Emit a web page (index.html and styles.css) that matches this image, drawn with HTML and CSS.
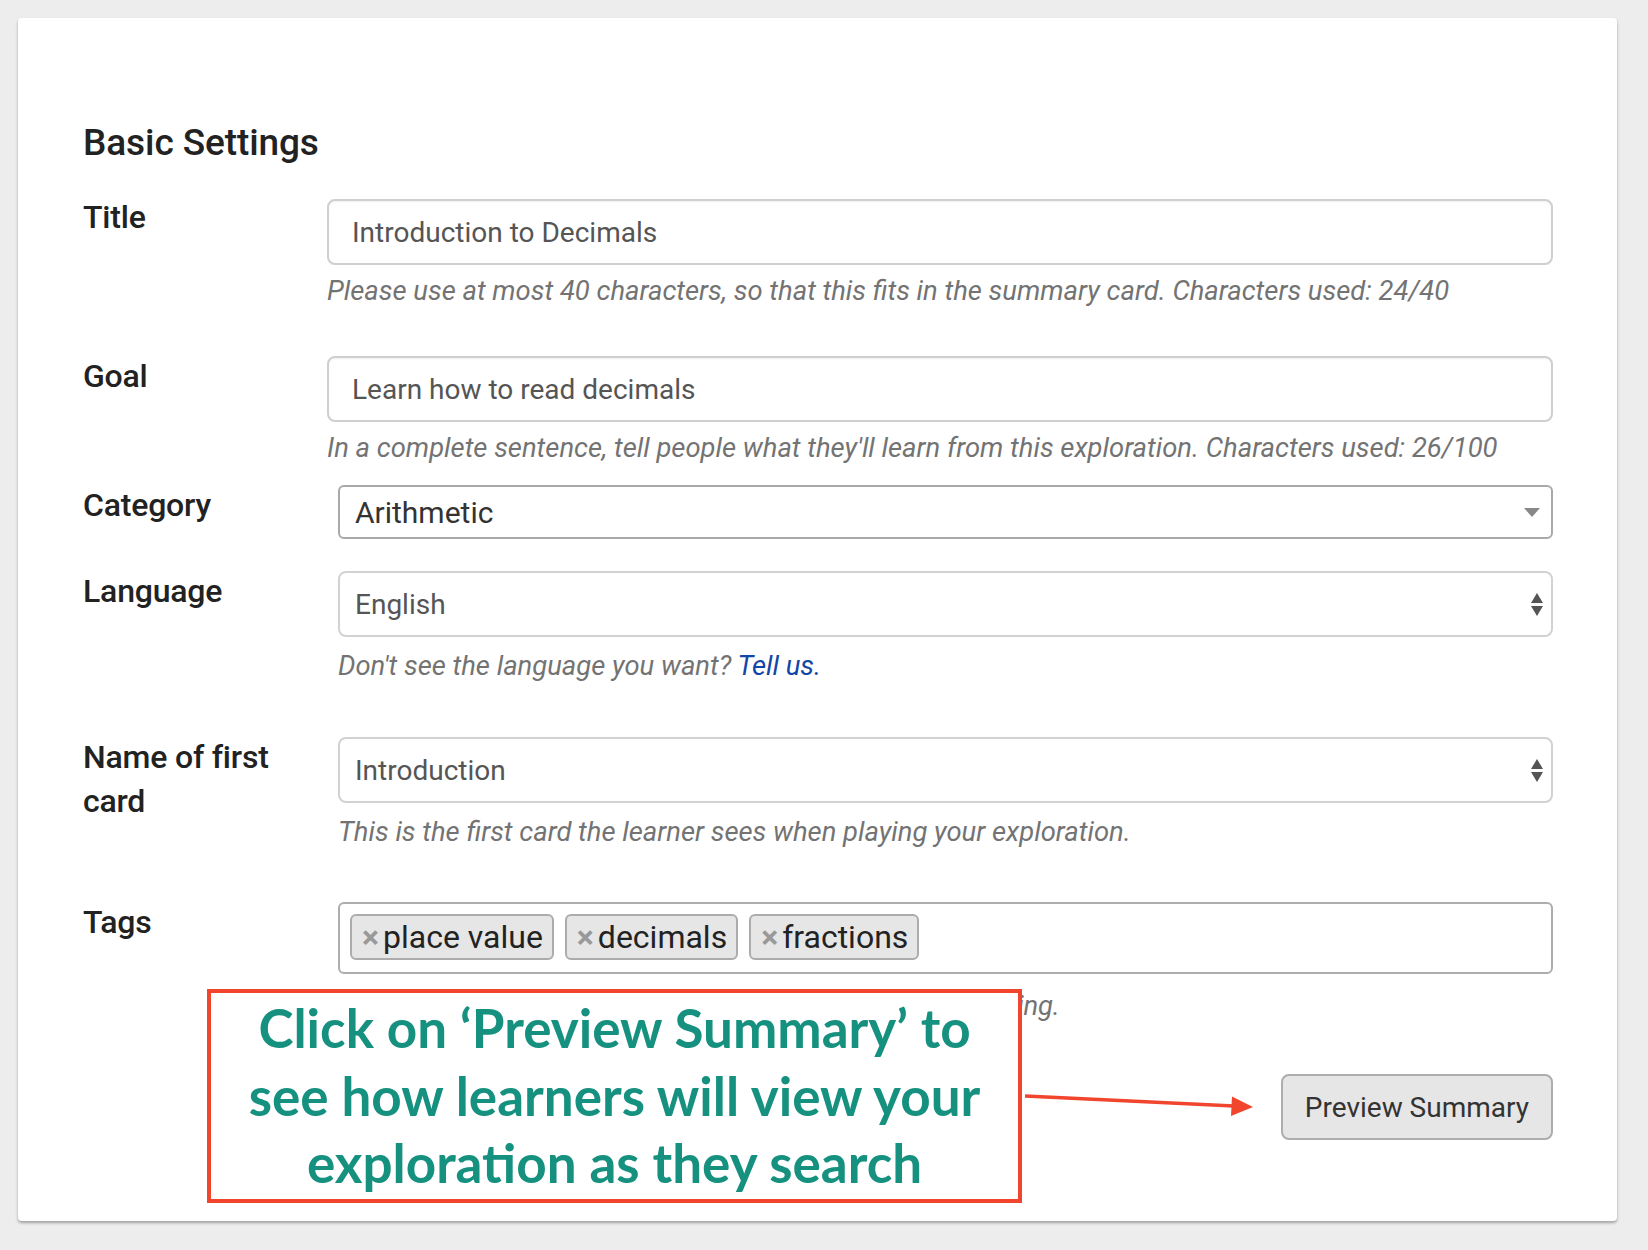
FILE: index.html
```html
<!DOCTYPE html>
<html lang="en">
<head>
<meta charset="utf-8">
<title>Basic Settings</title>
<link rel="stylesheet" href="styles.css">
</head>
<body>
<main class="card">
  <h2 class="heading">Basic Settings</h2>

  <section class="row row-title">
    <div class="label label-title">Title</div>
    <div class="field">
      <div class="text-input">Introduction to Decimals</div>
      <p class="help">Please use at most 40 characters, so that this fits in the summary card. Characters used: 24/40</p>
    </div>
  </section>

  <section class="row row-goal">
    <div class="label">Goal</div>
    <div class="field">
      <div class="text-input">Learn how to read decimals</div>
      <p class="help">In a complete sentence, tell people what they'll learn from this exploration. Characters used: 26/100</p>
    </div>
  </section>

  <section class="row row-category">
    <div class="label">Category</div>
    <div class="field indent">
      <div class="select select-dark">
        <span class="select-value">Arithmetic</span>
        <span class="caret-down"></span>
      </div>
    </div>
  </section>

  <section class="row row-language">
    <div class="label">Language</div>
    <div class="field indent">
      <div class="select">
        <span>English</span>
        <span class="updown"><span class="tri-up"></span><span class="tri-down"></span></span>
      </div>
      <p class="help help-select">Don't see the language you want? <a class="link" href="#">Tell us.</a></p>
    </div>
  </section>

  <section class="row row-card">
    <div class="label">Name of first card</div>
    <div class="field indent">
      <div class="select">
        <span>Introduction</span>
        <span class="updown"><span class="tri-up"></span><span class="tri-down"></span></span>
      </div>
      <p class="help help-select">This is the first card the learner sees when playing your exploration.</p>
    </div>
  </section>

  <section class="row row-tags">
    <div class="label">Tags</div>
    <div class="field indent">
      <div class="tag-box">
        <span class="chip"><span class="chip-x">×</span>place value</span>
        <span class="chip"><span class="chip-x">×</span>decimals</span>
        <span class="chip"><span class="chip-x">×</span>fractions</span>
      </div>
      <p class="help help-tags">Add tags to help learners find the exploration when searching.</p>
    </div>
  </section>

  <div class="actions">
    <button class="btn" type="button">Preview Summary</button>
  </div>

  <div class="callout">Click on ‘Preview Summary’ to<br>see how learners will view your<br>exploration as they search</div>
  <svg class="callout-arrow" width="240" height="36" viewBox="0 0 240 36" aria-hidden="true">
    <line x1="5" y1="11" x2="214" y2="21" stroke="#f2452d" stroke-width="3.5"/>
    <polygon points="212,11.5 233,22 211,31" fill="#f2452d"/>
  </svg>
</main>
</body>
</html>
```

FILE: styles.css
```css
* { box-sizing: border-box; }

html, body {
  margin: 0;
  padding: 0;
  background: #ededed;
}

body {
  font-family: Roboto, "Noto Sans", "Liberation Sans", sans-serif;
  color: #222;
  padding: 18px 31px 29px 18px;
}

.card {
  position: relative;
  background: #fff;
  border-radius: 4px;
  box-shadow: 0 2px 3px rgba(0, 0, 0, 0.32);
  padding: 103px 64px 81px 65px;
}

.heading {
  margin: 0 0 34px 0;
  font-size: 37px;
  line-height: 44px;
  font-weight: 500;
  color: #222;
  letter-spacing: -0.1px;
}

.row {
  display: grid;
  grid-template-columns: 244px 1fr;
}

.label {
  font-size: 32px;
  line-height: 44px;
  font-weight: 500;
  color: #222;
  margin-top: -2px;
  padding-right: 40px;
  letter-spacing: -0.2px;
}

.label-title { margin-top: -4px; }

.field.indent { padding-left: 11px; }

.row-title { margin-bottom: 47px; }
.row-goal { margin-bottom: 19px; }
.row-category { margin-bottom: 32px; }
.row-language { margin-bottom: 53px; }
.row-card { margin-bottom: 52px; }
.row-tags { margin-bottom: 50px; }

.text-input {
  height: 66px;
  border: 2px solid #cfcfcf;
  border-radius: 8px;
  box-shadow: inset 0 1px 2px rgba(0, 0, 0, 0.06);
  padding: 0 23px;
  display: flex;
  align-items: center;
  font-size: 28px;
  color: #555;
}

.help {
  margin: 8px 0 0 0;
  font-size: 27.4px;
  line-height: 36px;
  font-style: italic;
  color: #737373;
  white-space: nowrap;
}

.help-select { margin-top: 11px; }
.help-tags { margin-top: 14px; letter-spacing: -0.12px; }

.link {
  color: #1246a6;
  text-decoration: none;
}

.select {
  height: 66px;
  border: 2px solid #d2d2d2;
  border-radius: 8px;
  padding: 0 8px 0 15px;
  display: flex;
  align-items: center;
  justify-content: space-between;
  font-size: 28px;
  color: #555;
}

.row-category .select {
  height: 54px;
  border-color: #a9a9a9;
  border-radius: 6px;
  padding-right: 11px;
}

.select-value {
  font-size: 30px;
  color: #333;
}

.caret-down {
  width: 0;
  height: 0;
  border-left: 8px solid transparent;
  border-right: 8px solid transparent;
  border-top: 9px solid #888;
  margin-top: 1px;
}

.updown {
  display: flex;
  flex-direction: column;
  gap: 3px;
}

.tri-up, .tri-down {
  width: 0;
  height: 0;
  border-left: 6px solid transparent;
  border-right: 6px solid transparent;
}

.tri-up { border-bottom: 10px solid #555; }
.tri-down { border-top: 10px solid #555; }

.tag-box {
  height: 72px;
  border: 2px solid #adadad;
  border-radius: 6px;
  padding: 10px 10px;
  display: flex;
  gap: 11px;
  align-items: flex-start;
}

.chip {
  height: 46px;
  display: inline-flex;
  align-items: center;
  background: #e6e6e6;
  border: 2px solid #acacac;
  border-radius: 6px;
  padding: 0 9px 0 10px;
  font-size: 32px;
  color: #222;
}

.chip-x {
  color: #999;
  font-weight: 700;
  font-size: 32px;
  margin-right: 4px;
}

.actions {
  display: flex;
  justify-content: flex-end;
}

.btn {
  height: 66px;
  padding: 0 22px;
  background: #e6e6e6;
  border: 2px solid #adadad;
  border-radius: 8px;
  font-family: Roboto, "Noto Sans", "Liberation Sans", sans-serif;
  font-size: 28px;
  color: #333;
}

.callout {
  position: absolute;
  left: 189px;
  top: 971px;
  width: 815px;
  height: 214px;
  border: 4px solid #f2452d;
  background: #fff;
  padding: 1px 0 0 0;
  font-family: Lato, "Open Sans", sans-serif;
  font-weight: 700;
  font-size: 53px;
  line-height: 67.5px;
  color: #16917f;
  text-align: center;
  white-space: nowrap;
}

.callout-arrow {
  position: absolute;
  left: 1002px;
  top: 1067px;
}
```
